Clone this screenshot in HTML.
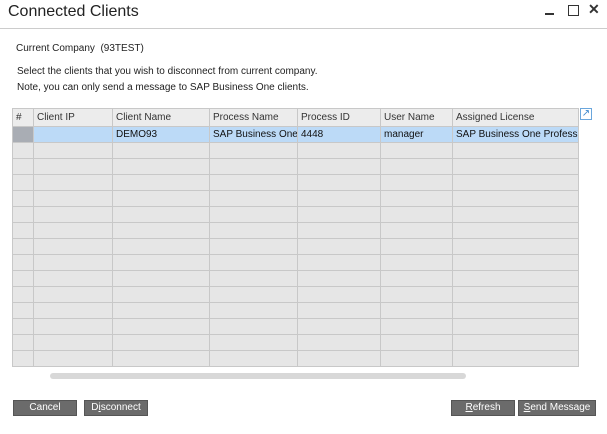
<!DOCTYPE html><html><head><style>
body{margin:0;width:607px;height:434px;background:#fff;font-family:"Liberation Sans",sans-serif;position:relative;overflow:hidden;color:#222}
.a{position:absolute;white-space:nowrap}
.t{font-size:10px}
table{position:absolute;left:12px;top:108px;width:566px;border-collapse:collapse;table-layout:fixed;font-size:10px}
td{border:1px solid #c8c8c8;height:15px;padding:0;text-indent:3px;background:#e6e6e6;overflow:hidden;white-space:nowrap}
tr.h td{height:17px;background:#ececec;color:#333}
tr.s td{background:#bcdaf7;color:#111}
tr.s td.n{background:#a9adb4}
.b{position:absolute;top:400px;height:16px;background:#6b6b6b;border:1px solid #555;color:#fff;font-size:10px;text-align:center;line-height:14px;box-sizing:border-box}
</style></head><body>
<div class="a" style="left:8px;top:3px;font-size:16px;color:#222">Connected Clients</div>
<div class="a" style="left:545px;top:13px;width:9px;height:2px;background:#333"></div>
<div class="a" style="left:568px;top:5px;width:9px;height:9px;border:1.5px solid #333"></div>
<div class="a" style="left:588px;top:1px;font-size:14px;font-weight:bold;color:#333">✕</div>
<div class="a" style="left:0;top:28px;width:607px;height:1px;background:#ccc"></div>
<div class="a t" style="left:16px;top:43px">Current Company&nbsp; (93TEST)</div>
<div class="a t" style="left:17px;top:66px">Select the clients that you wish to disconnect from current company.</div>
<div class="a t" style="left:17px;top:82px">Note, you can only send a message to SAP Business One clients.</div>
<div class="a" style="left:580px;top:108px;width:10px;height:10px;border:1px solid #6aa6dc;color:#3a86cc;font-size:10px;line-height:10px;text-align:center">↗</div>
<table>
<colgroup><col style="width:21px"><col style="width:79px"><col style="width:97px"><col style="width:88px"><col style="width:83px"><col style="width:72px"><col style="width:126px"></colgroup>
<tr class="h"><td>#</td><td>Client IP</td><td>Client Name</td><td>Process Name</td><td>Process ID</td><td>User Name</td><td>Assigned License</td></tr>
<tr class="s"><td class="n"></td><td></td><td>DEMO93</td><td>SAP Business One.</td><td>4448</td><td>manager</td><td>SAP Business One Professio</td></tr>
<tr><td></td><td></td><td></td><td></td><td></td><td></td><td></td></tr>
<tr><td></td><td></td><td></td><td></td><td></td><td></td><td></td></tr>
<tr><td></td><td></td><td></td><td></td><td></td><td></td><td></td></tr>
<tr><td></td><td></td><td></td><td></td><td></td><td></td><td></td></tr>
<tr><td></td><td></td><td></td><td></td><td></td><td></td><td></td></tr>
<tr><td></td><td></td><td></td><td></td><td></td><td></td><td></td></tr>
<tr><td></td><td></td><td></td><td></td><td></td><td></td><td></td></tr>
<tr><td></td><td></td><td></td><td></td><td></td><td></td><td></td></tr>
<tr><td></td><td></td><td></td><td></td><td></td><td></td><td></td></tr>
<tr><td></td><td></td><td></td><td></td><td></td><td></td><td></td></tr>
<tr><td></td><td></td><td></td><td></td><td></td><td></td><td></td></tr>
<tr><td></td><td></td><td></td><td></td><td></td><td></td><td></td></tr>
<tr><td></td><td></td><td></td><td></td><td></td><td></td><td></td></tr>
<tr><td></td><td></td><td></td><td></td><td></td><td></td><td></td></tr>
</table>
<div class="a" style="left:50px;top:373px;width:416px;height:6px;border-radius:3px;background:#d8d8d8"></div>
<div class="b" style="left:13px;width:64px">Cancel</div>
<div class="b" style="left:84px;width:64px">D<u>i</u>sconnect</div>
<div class="b" style="left:451px;width:64px"><u>R</u>efresh</div>
<div class="b" style="left:518px;width:78px"><u>S</u>end Message</div>
</body></html>
